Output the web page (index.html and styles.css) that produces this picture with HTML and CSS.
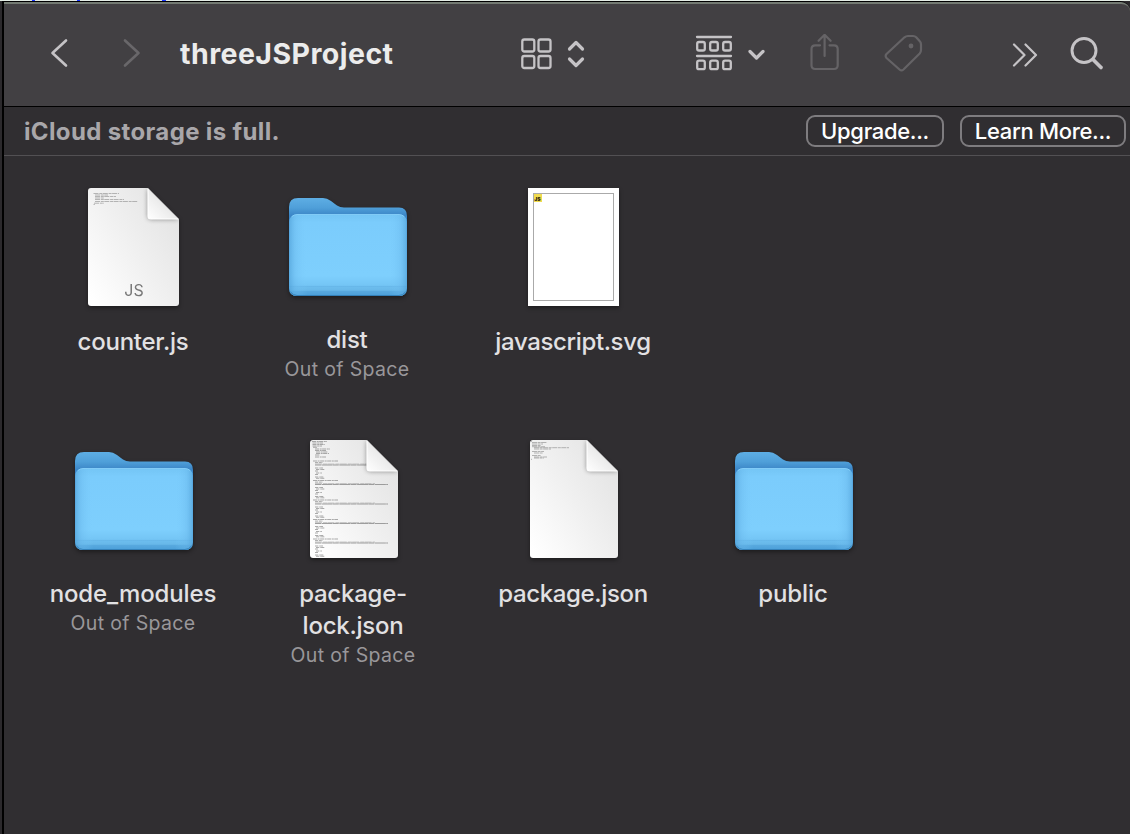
FILE: index.html
```html
<!DOCTYPE html>
<html lang="en">
<head>
<meta charset="utf-8">
<title>threeJSProject</title>
<link rel="stylesheet" href="styles.css">
</head>
<body>
<svg class="defs" width="0" height="0" aria-hidden="true">
  <defs>
    <linearGradient id="paper" x1="1" y1=".1" x2="0" y2=".9"><stop offset="0" stop-color="#e2e2e2"/><stop offset=".5" stop-color="#f0f0f0"/><stop offset="1" stop-color="#ffffff"/></linearGradient>
    <linearGradient id="curl" x1="0" y1="1" x2=".6" y2=".4"><stop offset="0" stop-color="#ffffff"/><stop offset="1" stop-color="#e6e6e6"/></linearGradient>
    <linearGradient id="back" x1="0" y1="0" x2="0" y2="1"><stop offset="0" stop-color="#5eaee4"/><stop offset=".1" stop-color="#4f9fd9"/><stop offset=".18" stop-color="#3b85c6"/><stop offset="1" stop-color="#4a9eda"/></linearGradient>
    <linearGradient id="edge" x1="0" y1="0" x2="1" y2="0"><stop offset="0" stop-color="#4f9fd6" stop-opacity=".65"/><stop offset=".05" stop-color="#68b7eb" stop-opacity=".4"/><stop offset=".15" stop-color="#7dcefd" stop-opacity="0"/><stop offset=".85" stop-color="#7dcefd" stop-opacity="0"/><stop offset=".95" stop-color="#68b7eb" stop-opacity=".4"/><stop offset="1" stop-color="#4f9fd6" stop-opacity=".65"/></linearGradient>
    <linearGradient id="front" x1="0" y1="0" x2="0" y2="1"><stop offset="0" stop-color="#74c5f5"/><stop offset=".1" stop-color="#7bccfc"/><stop offset=".75" stop-color="#7ecffd"/><stop offset=".87" stop-color="#74c5f5"/><stop offset=".88" stop-color="#65b5e7"/><stop offset=".89" stop-color="#6cbdee"/><stop offset=".93" stop-color="#68b8e9"/><stop offset=".94" stop-color="#58a9df"/><stop offset="1" stop-color="#4b9fd8"/></linearGradient>
    <filter id="soft" x="-30%" y="-30%" width="160%" height="160%"><feGaussianBlur stdDeviation="2.4"/></filter>
    <clipPath id="wide"><path d="M3 0H60L91 31V115a3 3 0 0 1-3 3H3a3 3 0 0 1-3-3V3a3 3 0 0 1 3-3Z"/></clipPath>
    <clipPath id="narrow"><path d="M3 0H57L88 31V115a3 3 0 0 1-3 3H3a3 3 0 0 1-3-3V3a3 3 0 0 1 3-3Z"/></clipPath>
    <symbol id="folder" viewBox="0 0 118 98">
      <path d="M0 9Q0 0 9 0H34Q38 0 42 3L48 7.500Q51 9.500 55 9.500H110Q118 9.500 118 18V90Q118 98 110 98H8Q0 98 0 90Z" fill="url(#back)"/>
      <path d="M.5 24Q.5 16.500 8 16.500H110Q117.500 16.500 117.500 24V90Q117.500 98 110 98H8Q.5 98 .5 90Z" fill="url(#front)"/>
      <path d="M.5 24Q.5 16.500 8 16.500H110Q117.500 16.500 117.500 24V90Q117.500 98 110 98H8Q.5 98 .5 90Z" fill="url(#edge)"/>
      <path d="M3 18.500Q5 16.500 8 16.500H110Q113 16.500 115 18.500" fill="none" stroke="#8bd4fc" stroke-width=".8"/>
      <path d="M1.500 94Q4 97.500 8 97.500H110Q114 97.500 116.500 94" fill="none" stroke="#3480b8"/>
    </symbol>
    <symbol id="entry" viewBox="0 0 80 20" overflow="visible">
      <g fill="none" stroke="#888" stroke-width=".7">
        <path d="M0 1H25" stroke-dasharray="4 .6 2 .5"/><path d="M2 2.600H10" stroke-dasharray="3 .8"/>
        <path d="M2 4H62" stroke-opacity=".6" stroke-dasharray="7 1 4 .4"/><path d="M2 5H75" stroke-width=".8" stroke-dasharray="6 .5 11 .3"/>
        <path d="M2 8H10M3 9.500H12M2 11H5M3 13H9M2 14.500H5M2 17H11M3 18.300H12" stroke-dasharray="3 .7 1 .4"/>
      </g>
    </symbol>
  </defs>
</svg>

<div class="desktop">
  <div class="behind"><i class="mark m1"></i><i class="mark m2"></i><i class="mark m3"></i></div>
  <main class="window">
    <header class="toolbar">
      <svg class="ic back" width="20" height="32" viewBox="0 0 20 32"><path d="M17 3.500 3.500 16 17 28.500"/></svg>
      <svg class="ic forward" width="20" height="32" viewBox="0 0 20 32"><path d="M3 3.500 16.500 16 3 28.500"/></svg>
      <h1 class="title">threeJSProject</h1>
      <svg class="ic view" width="68" height="40" viewBox="0 0 68 40">
        <g stroke-width="2.300"><rect x="2.300" y="5.500" width="12" height="12" rx="2"/><rect x="18.500" y="5.500" width="12" height="12" rx="2"/><rect x="2.300" y="22" width="12" height="12" rx="2"/><rect x="18.500" y="22" width="12" height="12" rx="2"/></g>
        <path stroke-width="3.200" d="m49.500 15 6.500-6.500 6.500 6.500M49.500 25l6.500 6.500 6.500-6.500"/>
      </svg>
      <svg class="ic group" width="72" height="40" viewBox="0 0 72 40">
        <path stroke-width="2.300" d="M2 3H36M2 22H36"/>
        <g stroke-width="2.300"><rect x="2.200" y="8" width="7.600" height="8.500" rx="1.800"/><rect x="15.200" y="8" width="7.600" height="8.500" rx="1.800"/><rect x="28.200" y="8" width="7.600" height="8.500" rx="1.800"/><rect x="2.200" y="26.700" width="7.600" height="8.500" rx="1.800"/><rect x="15.200" y="26.700" width="7.600" height="8.500" rx="1.800"/><rect x="28.200" y="26.700" width="7.600" height="8.500" rx="1.800"/></g>
        <path stroke-width="3.200" d="m55 17.500 6.500 6.500 6.500-6.500"/>
      </svg>
      <svg class="ic share" width="32" height="40" viewBox="0 0 32 40"><path d="M11 11.300H6.200Q2.500 11.300 2.500 15V31.300Q2.500 35 6.200 35H25Q28.700 35 28.700 31.300V15Q28.700 11.300 25 11.300H20.500M15.600 22V1.500M9.600 6.800 15.600 .8 21.600 6.800"/></svg>
      <svg class="ic tag" width="40" height="40" viewBox="0 0 40 40"><path d="M20.500 3.300Q22 2 24 2H29Q31 2 32.200 3.200L35.800 7.300Q37 8.500 37 10.500V16Q37 18 35.700 19.500L19.500 35.500Q17.500 37.300 15.500 35.500L2.500 24Q.8 22 2.500 20Z"/><circle cx="27" cy="12" r="2.400" class="dot"/></svg>
      <svg class="ic more" width="26" height="26" viewBox="0 0 26 26"><path d="M2 2.500 12.500 13 2 23.500M13.500 2.500 24 13 13.500 23.500"/></svg>
      <svg class="ic search" width="36" height="36" viewBox="0 0 36 36"><circle cx="15" cy="14.500" r="12"/><path stroke-width="3.700" d="m24 23.500 8 8"/></svg>
    </header>

    <section class="notice">
      <p class="message">iCloud storage is full.</p>
      <button class="btn upgrade"><span>Upgrade...</span></button>
      <button class="btn learn"><span>Learn More...</span></button>
    </section>

    <section class="files">
      <article class="file">
        <div class="thumb left"><svg class="doc" width="91" height="118" viewBox="0 0 91 118">
          <g clip-path="url(#wide)"><path d="M0 0H91V118H0Z" fill="url(#paper)"/><path d="M60 0V28q0 3 3 3H91Z" fill="#000" opacity=".5" filter="url(#soft)"/></g>
          <path d="M60 .5V28q0 3 3 3H90.500Z" fill="url(#curl)"/><path d="M60 1V28q0 3 3 3H90" fill="none" stroke="#fff" stroke-width="1.200"/>
          <path d="M5.500 5.500H31M7 7H20M7 8.500H28M7 10H16M7 11.500H36M7 13.500H50M6 15.200H16" fill="none" stroke="#999" stroke-width=".7" stroke-dasharray="5 .8 3 .5"/>
          <path d="M5.500 16.500H7" stroke="#999" stroke-width=".6"/>
          <text x="46" y="108" text-anchor="middle" class="kind">JS</text>
        </svg></div>
        <span class="name">counter.js</span>
      </article>
      <article class="file shifted">
        <div class="thumb"><svg class="folder" width="118" height="98"><use href="#folder"/></svg></div>
        <span class="name">dist</span><span class="status">Out of Space</span>
      </article>
      <article class="file">
        <div class="thumb left"><div class="page"><div class="frame"><span class="badge">JS</span></div></div></div>
        <span class="name tight">javascript.svg</span>
      </article>
      <article class="file first">
        <div class="thumb low"><svg class="folder" width="118" height="98"><use href="#folder"/></svg></div>
        <span class="name loose">node_modules</span><span class="status">Out of Space</span>
      </article>
      <article class="file">
        <div class="thumb"><svg class="doc" width="88" height="118" viewBox="0 0 88 118">
          <g clip-path="url(#narrow)"><path d="M0 0H88V118H0Z" fill="url(#paper)"/>
          <path d="M2 1.500H17M2.500 3H13M2.500 4.500H15M2.500 6H12M3 7.300H7M5 9H20M5 10.500H16M6 12H18M6 13.500H19M5 15H10M5 17H16" fill="none" stroke="#888" stroke-width=".7" stroke-dasharray="4 .7 2 .4"/>
          <use href="#entry" x="3" y="20" width="80" height="20"/><use href="#entry" x="3" y="39.500" width="80" height="20"/><use href="#entry" x="3" y="59" width="80" height="20"/><use href="#entry" x="3" y="78.500" width="80" height="20"/><use href="#entry" x="3" y="98" width="80" height="20"/>
          <path d="M57 0V28q0 3 3 3H88Z" fill="#000" opacity=".5" filter="url(#soft)"/></g>
          <path d="M57 .5V28q0 3 3 3H87.500Z" fill="url(#curl)"/><path d="M57 1V28q0 3 3 3H87" fill="none" stroke="#fff" stroke-width="1.200"/>
        </svg></div>
        <span class="name">package-<br>lock.json</span><span class="status">Out of Space</span>
      </article>
      <article class="file">
        <div class="thumb"><svg class="doc" width="88" height="118" viewBox="0 0 88 118">
          <g clip-path="url(#narrow)"><path d="M0 0H88V118H0Z" fill="url(#paper)"/><path d="M57 0V28q0 3 3 3H88Z" fill="#000" opacity=".5" filter="url(#soft)"/></g>
          <path d="M57 .5V28q0 3 3 3H87.500Z" fill="url(#curl)"/><path d="M57 1V28q0 3 3 3H87" fill="none" stroke="#fff" stroke-width="1.200"/>
          <path d="M1 1.300H2M2 2.500H17M2 4H13M2 5.500H11M2 6.700H15M4 7.700H39M4 9H21M2 11.500H14M4 13H13M2 15.500H11M4 17H17M4 18H14M1 19.300H2" fill="none" stroke="#888" stroke-width=".6" stroke-dasharray="5 .6 3 .5"/>
        </svg></div>
        <span class="name tight">package.json</span>
      </article>
      <article class="file">
        <div class="thumb low"><svg class="folder" width="118" height="98"><use href="#folder"/></svg></div>
        <span class="name loose">public</span>
      </article>
    </section>
  </main>
</div>
</body>
</html>
```
FILE: styles.css
```css
* { box-sizing: border-box; }
body { margin: 0; background: #302e31; font-family: Inter, "Noto Sans", sans-serif; }
.defs { position: absolute; }
.desktop { width: 1130px; height: 834px; overflow: hidden; background: #2b292c; display: flex; flex-direction: column; }
.behind { position: relative; flex: none; height: 1px; background: #e4ede5; }
.mark { position: absolute; top: 0; width: 3px; height: 1px; background: #1a35ff; }
.m1 { left: 32px; }
.m2 { left: 77px; }
.m3 { left: 162px; width: 4px; }
.window { flex: 1; margin-left: 2px; border-left: 2px solid #000; border-top: 1px solid #000; border-top-right-radius: 10px; background: #302e31; }
.toolbar { height: 105px; display: flex; align-items: center; background: #424043; border-top: 2px solid #737a72; border-bottom: 1px solid #000; border-top-right-radius: 9px; padding-bottom: 2px; }
.ic { flex: none; fill: none; stroke: #c5c3c6; stroke-width: 2.6; stroke-linecap: round; stroke-linejoin: round; }
.back { margin: -2px 0 0 45px; }
.forward { margin: -2px 0 0 53px; stroke: #69676a; }
.title { margin: 0 0 0 38px; width: 214px; font-size: 28.5px; line-height: 34px; font-weight: 700; color: #ececec; white-space: nowrap; letter-spacing: .45px; }
.view { margin-left: 126px; }
.group { margin-left: 107px; }
.share { margin-left: 42px; stroke: #656366; stroke-width: 2.2; }
.tag { margin-left: 43px; stroke: #656366; stroke-width: 2.2; }
.tag .dot { fill: #656366; stroke: none; }
.more { margin-left: 88px; margin-top: 2px; stroke-width: 2.2; }
.search { margin-left: 31px; stroke-width: 2.9; }
.notice { height: 49px; display: flex; align-items: center; padding: 0 4px 0 20px; border-bottom: 1px solid #525053; }
.message { margin: 2px auto 0 0; font-size: 24px; line-height: 30px; font-weight: 700; color: #a9a7aa; white-space: nowrap; letter-spacing: .36px; }
.btn { height: 32px; padding: 0; border: 2px solid #7e7c7f; border-radius: 9px; background: transparent; color: #fff; font: 500 22px/28px Inter, sans-serif; letter-spacing: -.3px; white-space: nowrap; }
.upgrade { width: 138px; }
.learn { width: 166px; margin-left: 16px; }
.files { display: grid; grid-template-columns: repeat(4, 220px); grid-template-rows: 252px 252px; padding: 32px 0 0 19px; }
.file { display: flex; flex-direction: column; align-items: center; }
.first { grid-column: 1; }
.shifted { margin: -2px 6px 0 -6px; }
.thumb { width: 120px; height: 118px; margin: 0 0 20px 2px; display: flex; align-items: center; justify-content: center; }
.left { padding-right: 1px; margin-left: 1px; }
.shifted .thumb { padding-top: 4px; }
.low { padding-top: 4px; }
.doc, .folder { display: block; filter: drop-shadow(0 2px 2px rgba(0, 0, 0, .4)); }
.kind { font: 16px Inter, sans-serif; fill: #777; }
.page { width: 91px; height: 118px; padding: 5px; background: #fff; box-shadow: 0 2px 4px rgba(0, 0, 0, .4); }
.frame { height: 108px; width: 81px; border: 1px solid #aaa; }
.badge { display: block; width: 8px; height: 8px; padding: 3px 1px 0 0; background: #f0db4f; color: #29230b; font: 900 5px/5px Inter, sans-serif; text-align: right; }
.name { color: #e2e1e3; font-size: 24px; line-height: 32px; font-weight: 500; letter-spacing: -.25px; text-align: center; white-space: nowrap; }
.tight { letter-spacing: -.36px; }
.loose { letter-spacing: -.1px; }
.status { color: #99979a; font-size: 19.5px; line-height: 26px; letter-spacing: .35px; white-space: nowrap; }
```
